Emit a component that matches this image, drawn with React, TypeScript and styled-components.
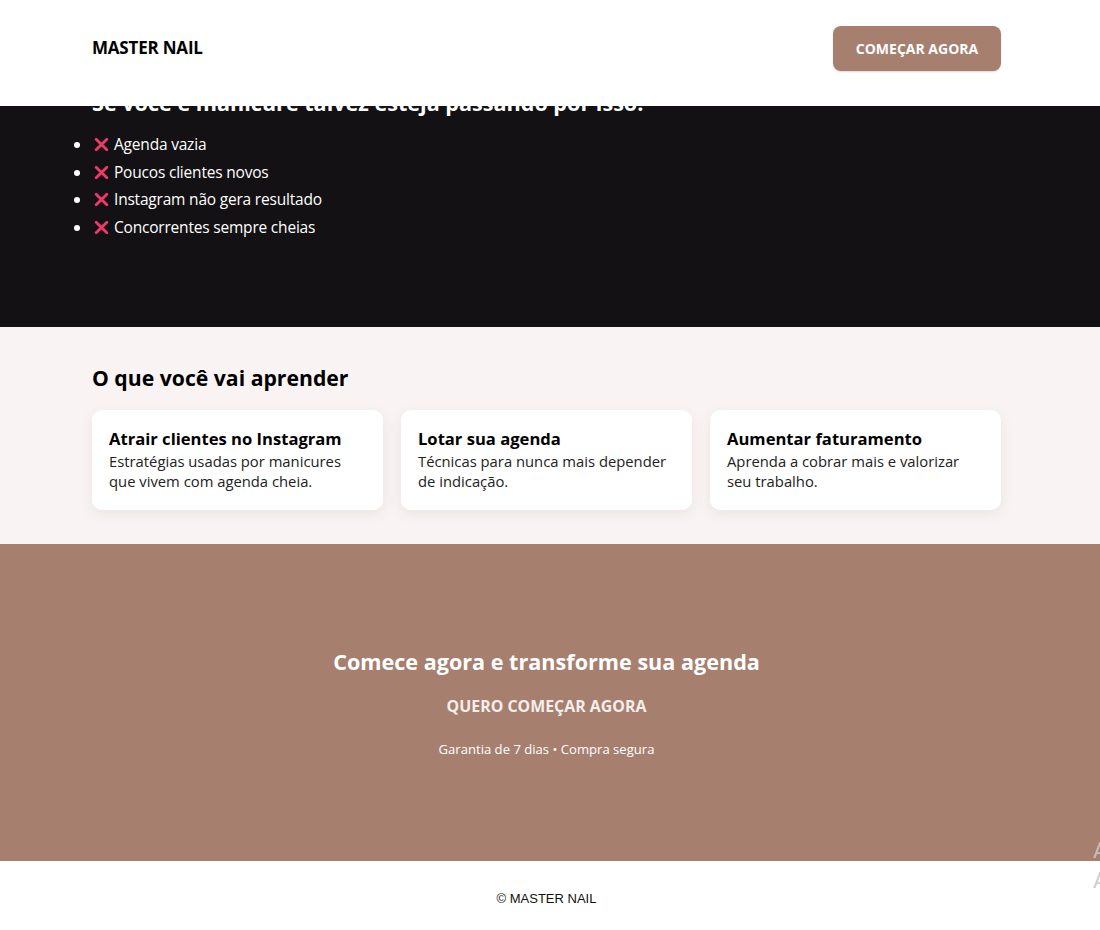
import React from "react";
import styled, { createGlobalStyle } from "styled-components";

const GlobalStyle = createGlobalStyle`
  html, body { margin: 0; padding: 0; background: #ffffff; }
  body { font-family: "Open Sans", "Noto Sans", sans-serif; color: #111; overflow: hidden; }
  * { box-sizing: border-box; }
`;

const Container = styled.div`
  width: 909px;
  margin-left: calc(50% - 458px);
`;

const Header = styled.header`
  position: fixed;
  top: 0;
  left: 0;
  right: 0;
  height: 106px;
  background: #ffffff;
  z-index: 10;
  padding-top: 26px;
`;

const HeaderInner = styled(Container)`
  display: flex;
  align-items: center;
  justify-content: space-between;
  height: 44px;
`;

const Logo = styled.div`
  font-weight: 700;
  font-size: 17px;
  letter-spacing: -0.2px;
  color: #000;
  margin-top: -2px;
`;

const HeaderButton = styled.button`
  width: 168px;
  height: 45px;
  border: none;
  border-radius: 8px;
  background: #a67f6f;
  color: #fff;
  font-family: inherit;
  font-weight: 700;
  font-size: 14px;
  box-shadow: 0 1px 2px rgba(0,0,0,0.15);
`;

const Hero = styled.section`
  background: #131114;
  padding: 88px 0 86px;
`;

const HeroTitle = styled.h1`
  margin: 0;
  font-size: 21.6px;
  line-height: 30px;
  font-weight: 700;
  color: #fff;
`;

const PainList = styled.ul`
  margin: 13px 0 0;
  padding: 0;
  list-style: disc outside;
  color: #fff;
`;

const PainItem = styled.li`
  font-size: 15.5px;
  line-height: 27.6px;
  height: 27.6px;
  letter-spacing: -0.2px;
`;

const CrossIcon = styled.svg`
  width: 15px;
  height: 15px;
  margin: 0 5px 0 2px;
  vertical-align: -2px;
`;

const Learn = styled.section`
  background: #f9f4f3;
  padding: 38px 0 34px;
`;

const SectionTitle = styled.h2`
  margin: 0 0 19px;
  font-size: 21.2px;
  line-height: 26px;
  font-weight: 700;
  color: #000;
`;

const Cards = styled.div`
  display: grid;
  grid-template-columns: repeat(3, 1fr);
  gap: 18px;
`;

const Card = styled.div`
  background: #fff;
  border-radius: 10px;
  padding: 18px 17px 17px;
  height: 100px;
  box-shadow: 0 4px 14px rgba(90, 60, 50, 0.09);
`;

const CardTitle = styled.h3`
  margin: 0 0 1px;
  font-size: 16.6px;
  line-height: 22px;
  font-weight: 700;
  color: #000;
`;

const CardText = styled.p`
  margin: 0;
  font-size: 14.8px;
  line-height: 20px;
  color: #222;
`;

const Cta = styled.section`
  background: #a67f6f;
  height: 317px;
  padding-top: 104px;
  text-align: center;
  color: #fff;
`;

const CtaTitle = styled.h2`
  margin: 0;
  font-size: 21.6px;
  line-height: 28px;
  font-weight: 700;
  color: #fff;
`;

const CtaButton = styled.button`
  margin-top: 20px;
  background: transparent;
  border: none;
  padding: 0;
  font-family: inherit;
  font-size: 15.9px;
  line-height: 20px;
  font-weight: 700;
  color: #f6eeeb;
  cursor: pointer;
`;

const CtaNote = styled.p`
  margin: 24px 0 0;
  font-size: 13.1px;
  line-height: 16px;
  color: #fff;
`;

const Footer = styled.footer`
  height: 69px;
  display: flex;
  align-items: center;
  justify-content: center;
  padding: 5px 7px 0 0;
  font-family: "Liberation Sans", Arial, sans-serif;
  font-size: 13px;
  color: #111;
`;

const Watermark = styled.div`
  position: fixed;
  left: 1093px;
  top: 838px;
  z-index: 20;
  color: rgba(200, 200, 200, 0.85);
  font-family: "DejaVu Sans", sans-serif;
  white-space: nowrap;
  pointer-events: none;
`;

const WatermarkLine = styled.div`
  font-size: 22px;
  line-height: 26px;
  & + & { margin-top: 4px; }
`;

const pains = [
  "Agenda vazia",
  "Poucos clientes novos",
  "Instagram não gera resultado",
  "Concorrentes sempre cheias",
];

const cards = [
  { title: "Atrair clientes no Instagram", text: "Estratégias usadas por manicures que vivem com agenda cheia." },
  { title: "Lotar sua agenda", text: "Técnicas para nunca mais depender de indicação." },
  { title: "Aumentar faturamento", text: "Aprenda a cobrar mais e valorizar seu trabalho." },
];

const Cross = () => (
  <CrossIcon viewBox="0 0 14 14" aria-hidden="true">
    <path d="M2 2 L12 12 M12 2 L2 12" stroke="#f0386b" strokeWidth="2.6" strokeLinecap="round" />
  </CrossIcon>
);

export default function App() {
  return (
    <>
      <GlobalStyle />
      <Header>
        <HeaderInner>
          <Logo>MASTER NAIL</Logo>
          <HeaderButton>COMEÇAR AGORA</HeaderButton>
        </HeaderInner>
      </Header>
      <Hero>
        <Container>
          <HeroTitle>Se você é manicure talvez esteja passando por isso:</HeroTitle>
          <PainList>
            {pains.map((p) => (
              <PainItem key={p}>
                <Cross />
                {p}
              </PainItem>
            ))}
          </PainList>
        </Container>
      </Hero>
      <Learn>
        <Container>
          <SectionTitle>O que você vai aprender</SectionTitle>
          <Cards>
            {cards.map((c) => (
              <Card key={c.title}>
                <CardTitle>{c.title}</CardTitle>
                <CardText>{c.text}</CardText>
              </Card>
            ))}
          </Cards>
        </Container>
      </Learn>
      <Cta>
        <Container>
          <CtaTitle>Comece agora e transforme sua agenda</CtaTitle>
          <CtaButton>QUERO COMEÇAR AGORA</CtaButton>
          <CtaNote>Garantia de 7 dias • Compra segura</CtaNote>
        </Container>
      </Cta>
      <Footer>© MASTER NAIL</Footer>
      <Watermark>
        <WatermarkLine>Ativar o Windows</WatermarkLine>
        <WatermarkLine>Acesse Configurações</WatermarkLine>
      </Watermark>
    </>
  );
}
